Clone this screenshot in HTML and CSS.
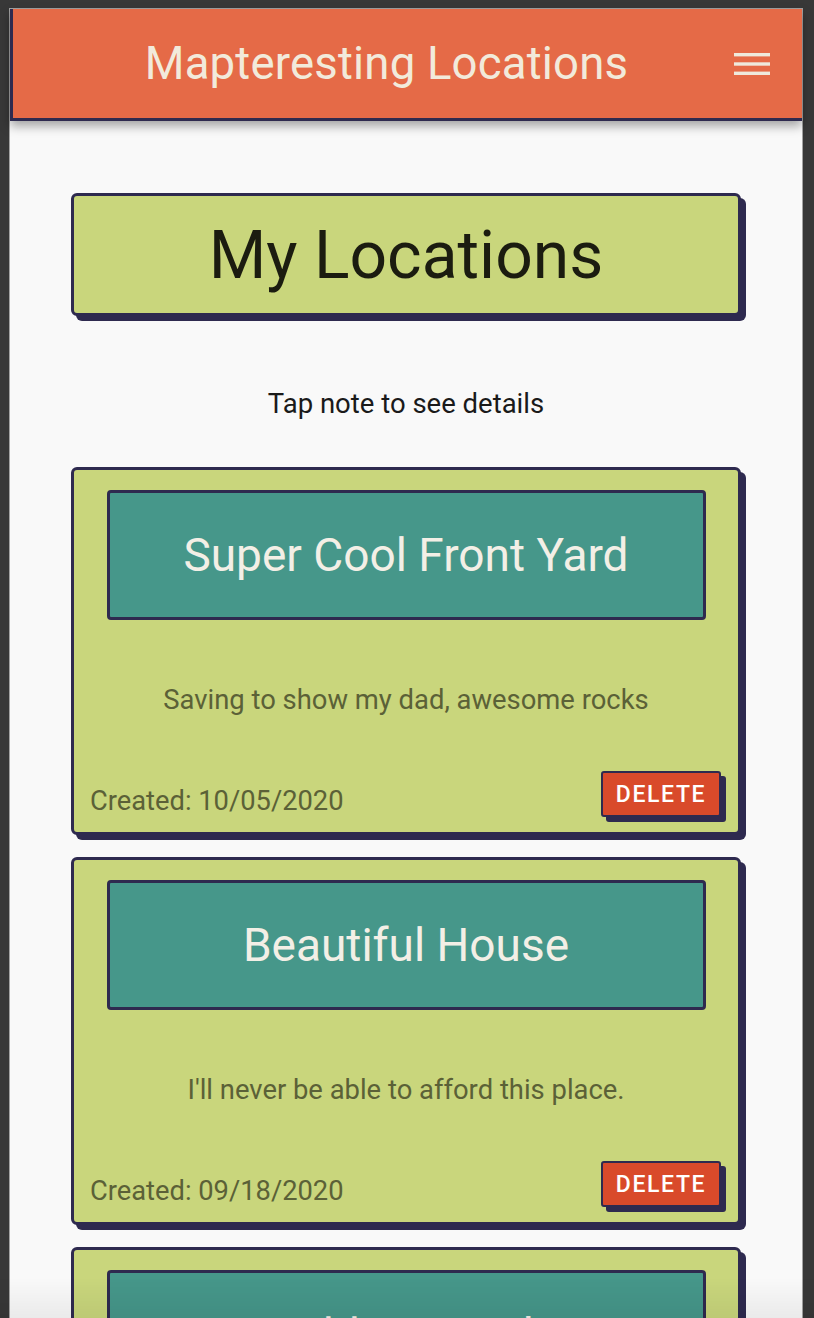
FILE: index.html
```html
<!DOCTYPE html>
<html>
<head>
<meta charset="utf-8">
<link rel="stylesheet" href="styles.css">
</head>
<body>
<div class="device">
  <header class="topbar">
    <h1 class="brand">Mapteresting Locations</h1>
    <button class="menu" aria-label="menu">
      <svg width="36" height="24" viewBox="0 0 36 24"><rect x="0" y="1" width="36" height="3.4" fill="#efe9dc"/><rect x="0" y="10.3" width="36" height="3.4" fill="#efe9dc"/><rect x="0" y="19.6" width="36" height="3.4" fill="#efe9dc"/></svg>
    </button>
  </header>
  <main class="content">
    <div class="page-title"><h2>My Locations</h2></div>
    <p class="hint">Tap note to see details</p>
    <div class="cards">
      <article class="card">
        <div class="card-title">Super Cool Front Yard</div>
        <p class="card-desc">Saving to show my dad, awesome rocks</p>
        <div class="card-foot">
          <span class="created">Created: 10/05/2020</span>
          <button class="delete">DELETE</button>
        </div>
      </article>
      <article class="card">
        <div class="card-title">Beautiful House</div>
        <p class="card-desc">I'll never be able to afford this place.</p>
        <div class="card-foot">
          <span class="created">Created: 09/18/2020</span>
          <button class="delete">DELETE</button>
        </div>
      </article>
      <article class="card">
        <div class="card-title">Hidden Beach</div>
        <p class="card-desc">Great spot for a picnic</p>
        <div class="card-foot">
          <span class="created">Created: 08/02/2020</span>
          <button class="delete">DELETE</button>
        </div>
      </article>
    </div>
  </main>
</div>
<div class="fade"></div>
</body>
</html>
```
FILE: styles.css
```css
html, body {
  margin: 0;
  padding: 0;
  height: 100%;
  overflow: hidden;
}
body {
  background: #383838;
  font-family: Roboto, "Liberation Sans", sans-serif;
}
.device {
  margin: 8px 11px 0 9px;
  border: 1px solid #a3a3a3;
  border-bottom: none;
  background: #f9f9f9;
  height: 1400px;
}
.topbar {
  height: 109px;
  background: #e56a47;
  border-left: 3px solid #2e2a4f;
  border-bottom: 3px solid #2e2a4f;
  box-shadow: 0 5px 10px rgba(0,0,0,0.35);
  display: flex;
  align-items: center;
  position: relative;
  z-index: 1;
}
.brand {
  margin: 0;
  flex: 1;
  text-align: center;
  padding-left: 26px;
  font-weight: 400;
  font-size: 45.5px;
  color: #f2eadb;
  letter-spacing: 0.2px;
}
.menu {
  background: none;
  border: none;
  padding: 0;
  margin: 0 32px 0 0;
  width: 36px;
  height: 24px;
  display: flex;
}
.content {
  padding-top: 72px;
}
.page-title {
  width: 670px;
  height: 123px;
  box-sizing: border-box;
  margin: 0 auto;
  background: #c9d67c;
  border: 3px solid #2e2a4f;
  border-radius: 6px;
  box-shadow: 5px 5px 0 #2e2a4f;
  display: flex;
  align-items: center;
  justify-content: center;
}
.page-title h2 {
  margin: 0;
  font-size: 66px;
  font-weight: 400;
  color: #1b1c10;
  padding-top: 2px;
}
.hint {
  margin: 72px 0 0;
  text-align: center;
  font-size: 27.5px;
  color: #1a1a1a;
  line-height: 32px;
}
.cards {
  margin-top: 47px;
  display: flex;
  flex-direction: column;
  gap: 22px;
  align-items: center;
}
.card {
  width: 670px;
  height: 368px;
  box-sizing: border-box;
  background: #c9d67c;
  border: 3px solid #2e2a4f;
  border-radius: 6px;
  box-shadow: 5px 5px 0 #2e2a4f;
  padding: 20px 16px 0 16px;
  display: flex;
  flex-direction: column;
}
.card-title {
  width: 599px;
  height: 130px;
  box-sizing: border-box;
  margin: 0 auto;
  background: #46978a;
  border: 3px solid #2e2a4f;
  border-radius: 4px;
  display: flex;
  align-items: center;
  justify-content: center;
  color: #f3efe6;
  font-size: 46px;
}
.card-desc {
  margin: 54px 0 0;
  text-align: center;
  color: #5b6137;
  font-size: 27.4px;
  line-height: 52px;
}
.card-foot {
  margin-top: 45px;
  display: flex;
  align-items: center;
  justify-content: space-between;
}
.created {
  color: #5b6137;
  font-size: 27.3px;
  padding-top: 14px;
}
.delete {
  width: 120px;
  height: 46px;
  box-sizing: border-box;
  background: #d94a2a;
  border: 2px solid #2e2a4f;
  border-radius: 3px;
  box-shadow: 5px 5px 0 #2e2a4f;
  color: #ffffff;
  font-family: Roboto, "Liberation Sans", sans-serif;
  font-size: 23px;
  font-weight: 500;
  letter-spacing: 1.6px;
  padding: 0;
  margin-right: 1px;
}
.fade {
  position: fixed;
  left: 0;
  right: 0;
  bottom: 0;
  height: 40px;
  background: linear-gradient(to bottom, rgba(0,0,0,0), rgba(0,0,0,0.06));
  pointer-events: none;
}
```
